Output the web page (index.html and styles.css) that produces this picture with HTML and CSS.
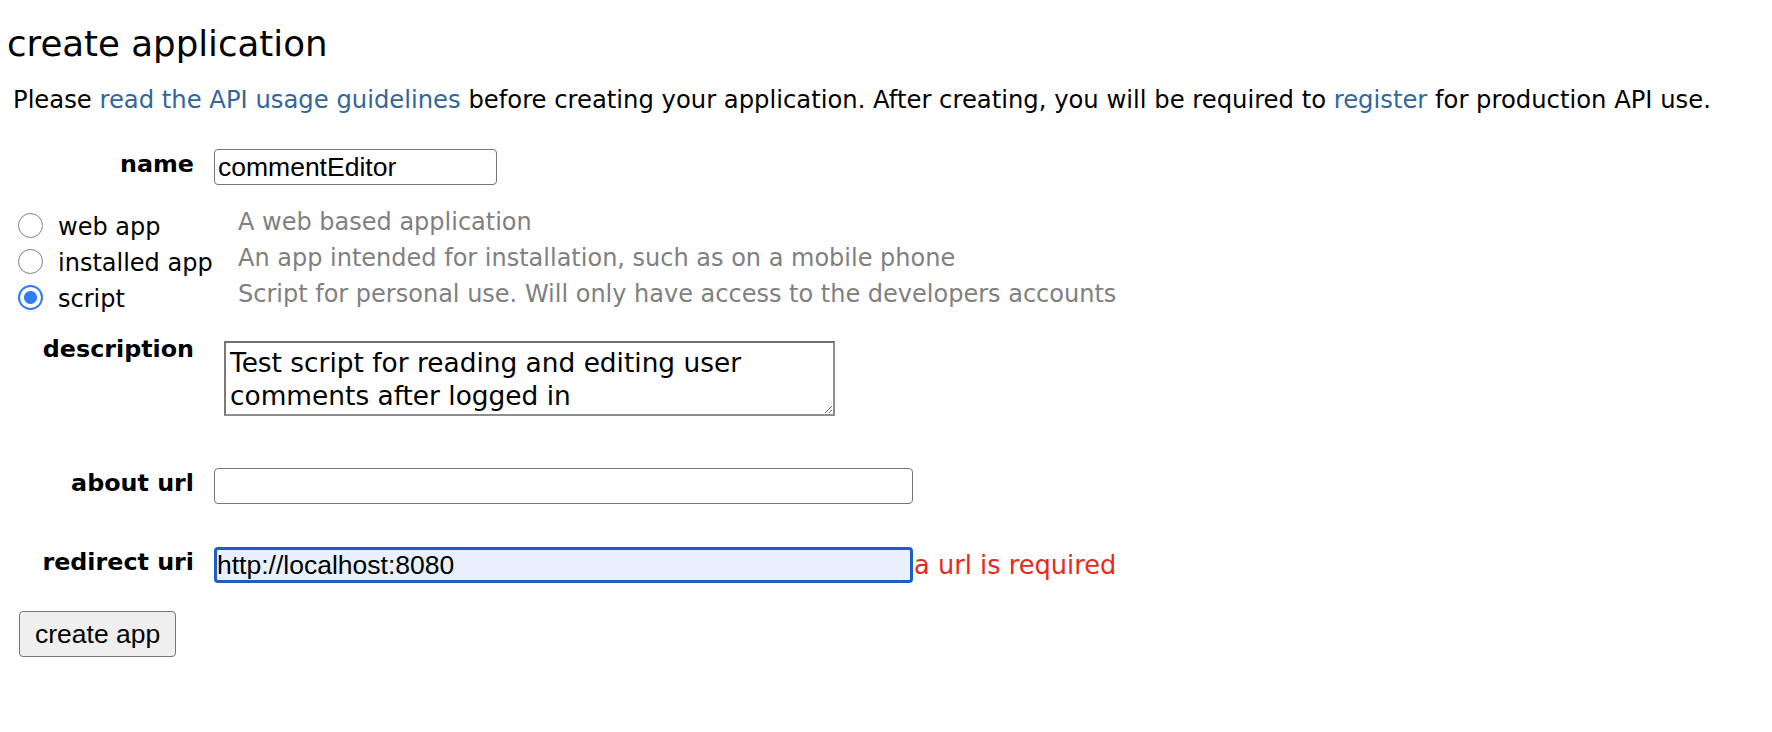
FILE: index.html
```html
<!DOCTYPE html>
<html lang="en">
<head>
<meta charset="utf-8">
<title>create application</title>
<link rel="stylesheet" href="styles.css">
</head>
<body>
<h1 class="page-title">create application</h1>
<p class="intro">Please <a href="#" class="link">read the API usage guidelines</a> before creating your application. After creating, you will be required to <a href="#" class="link">register</a> for production API use.</p>
<form class="app-form">
  <div class="form-row row-name">
    <label class="field-label" for="app-name">name</label>
    <input id="app-name" class="text-input input-short" type="text" value="commentEditor">
  </div>
  <div class="app-types">
    <div class="type-row">
      <label class="type-choice"><input class="radio" type="radio" name="app-type"><span>web app</span></label>
      <span class="type-desc">A web based application</span>
    </div>
    <div class="type-row">
      <label class="type-choice"><input class="radio" type="radio" name="app-type"><span>installed app</span></label>
      <span class="type-desc">An app intended for installation, such as on a mobile phone</span>
    </div>
    <div class="type-row">
      <label class="type-choice"><input class="radio" type="radio" name="app-type" checked><span>script</span></label>
      <span class="type-desc">Script for personal use. Will only have access to the developers accounts</span>
    </div>
  </div>
  <div class="form-row row-desc">
    <label class="field-label" for="app-desc">description</label>
    <textarea id="app-desc" class="desc-area">Test script for reading and editing user comments after logged in</textarea>
  </div>
  <div class="form-row row-about">
    <label class="field-label" for="app-about">about url</label>
    <input id="app-about" class="text-input input-long" type="text">
  </div>
  <div class="form-row row-redirect">
    <label class="field-label" for="app-redirect">redirect uri</label>
    <div class="with-error">
      <input id="app-redirect" class="text-input input-long input-focused" type="text" value="http://localhost:8080">
      <span class="error">a url is required</span>
    </div>
  </div>
  <button class="create-btn" type="button">create app</button>
</form>
</body>
</html>
```

FILE: styles.css
```css
html, body {
  margin: 0;
  padding: 0;
  background: #fff;
}

body {
  font-family: "DejaVu Sans", Verdana, sans-serif;
  color: #000;
}

.page-title {
  margin: 24px 0 0;
  padding-left: 7px;
  font-size: 35.6px;
  line-height: 40px;
  font-weight: normal;
}

.intro {
  margin: 22px 0 0;
  padding-left: 13px;
  font-size: 24.27px;
  line-height: 28px;
  white-space: nowrap;
}

.link {
  color: #369;
  text-decoration: none;
}

.app-form {
  margin: 0;
}

.form-row {
  display: flex;
  align-items: flex-start;
}

.field-label {
  width: 194px;
  flex: none;
  text-align: right;
  font-weight: bold;
  font-size: 23.8px;
  line-height: 28px;
  padding-top: 1px;
}

.row-name {
  margin-top: 35px;
}

.text-input {
  box-sizing: border-box;
  height: 36px;
  margin: 0 0 0 20px;
  padding: 0 3px;
  border: 1px solid #767676;
  border-radius: 4px;
  background: #fff;
  font-family: "Liberation Sans", Arial, sans-serif;
  font-size: 26.5px;
  color: #000;
  outline: none;
}

.input-short {
  width: 283px;
}

.input-long {
  width: 699px;
}

.input-focused {
  border: 3px solid #1f5cc4;
  padding: 0;
  background: #e8f0fe;
}

.app-types {
  margin-top: 23px;
}

.type-row {
  display: flex;
  align-items: flex-start;
  height: 36px;
  font-size: 24px;
  line-height: 28px;
}

.type-choice {
  display: flex;
  align-items: flex-start;
  width: 238px;
  flex: none;
  padding-top: 5px;
}

.radio {
  appearance: none;
  -webkit-appearance: none;
  box-sizing: border-box;
  width: 25px;
  height: 25px;
  margin: 0 15px 0 18px;
  border: 1.5px solid #808080;
  border-radius: 50%;
  background: #fff;
  flex: none;
}

.radio:checked {
  border: 2.5px solid #2f7cf5;
  background: radial-gradient(circle, #2f7cf5 0 6px, #fff 7px);
}

.type-desc {
  color: #808080;
  white-space: nowrap;
}

.row-desc {
  margin-top: 18px;
}

.desc-area {
  box-sizing: border-box;
  width: 611px;
  height: 75px;
  margin: 7px 0 0 30px;
  padding: 3px 4px 0;
  border: 2px solid #8e8e8e;
  border-top-color: #6f6f6f;
  border-left-color: #7a7a7a;
  font-family: "DejaVu Sans", Verdana, sans-serif;
  font-size: 26.4px;
  line-height: 33px;
  color: #000;
  background: #fff;
  outline: none;
  overflow: hidden;
}

.row-about {
  margin-top: 52px;
}

.row-redirect {
  margin-top: 43px;
}

.with-error {
  display: flex;
  align-items: baseline;
}

.error {
  margin-left: 1px;
  color: #e52b20;
  font-size: 25.7px;
  white-space: nowrap;
}

.create-btn {
  display: block;
  margin: 28px 0 0 19px;
  padding: 7px 15px;
  border: 1px solid #767676;
  border-radius: 4px;
  background: #efefef;
  font-family: "Liberation Sans", Arial, sans-serif;
  font-size: 26.5px;
  line-height: 30px;
  color: #000;
}
```
